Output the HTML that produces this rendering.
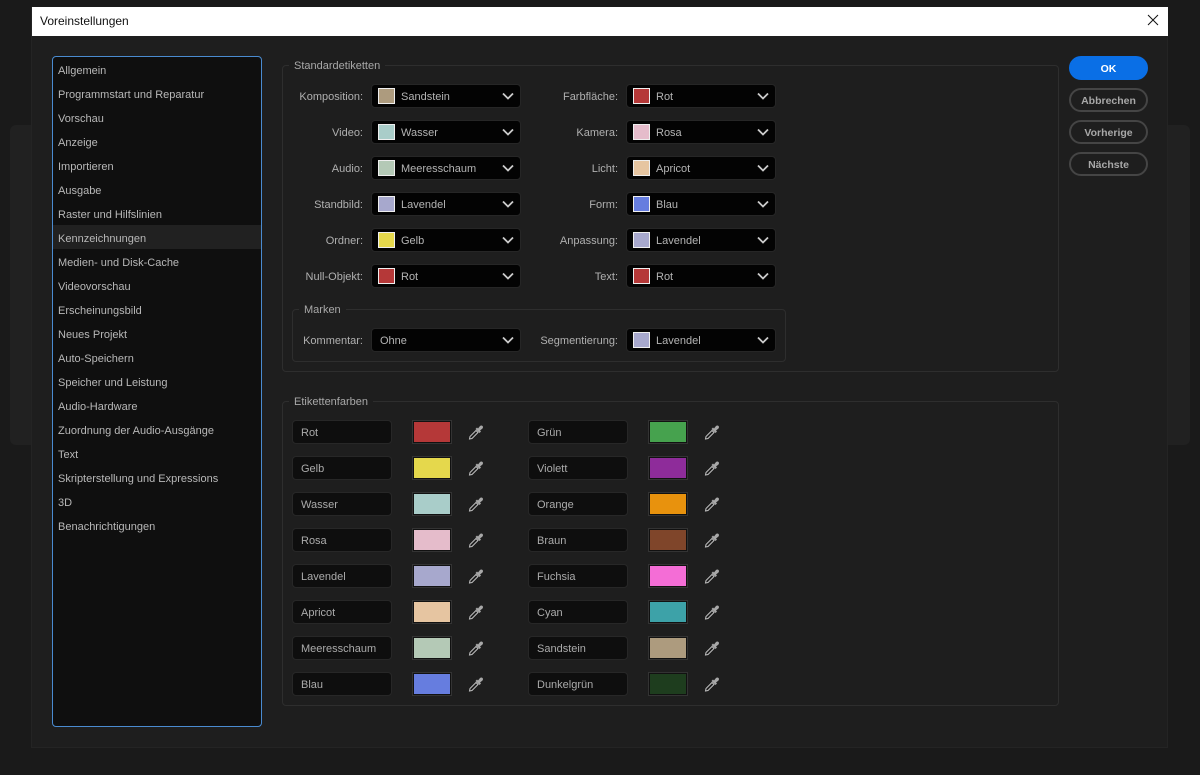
<!DOCTYPE html>
<html lang="de"><head><meta charset="utf-8"><title>Voreinstellungen</title>
<style>
html,body{margin:0;padding:0;width:1200px;height:775px;overflow:hidden;background:#1a1a1a}
*{box-sizing:border-box}
body{position:relative;font:11px/16px "Liberation Sans",sans-serif;color:#b4b4b4}
div,span,svg{position:absolute}
.bgp{left:10px;top:125px;width:1180px;height:320px;background:#212121;border-radius:6px}
.dlg{left:31px;top:7px;width:1137px;height:741px;background:#1e1e1e;border:1px solid #242424;border-top:0}
.tb{left:32px;top:7px;width:1136px;height:29px;background:#fff;color:#111;font-size:12px;line-height:28px;padding-left:8px}
.list{left:52px;top:56px;width:210px;height:671px;background:#0f0f0f;border:1px solid #4a8bd0;border-radius:4px}
.it{left:58px;width:200px;height:24px;margin-top:1px;line-height:24px;white-space:nowrap;color:#b8b8b8}
.sel{left:53px;top:225px;width:208px;height:24px;background:#212121}
.grp{border:1px solid #2e2e2e;border-radius:4px}
.lg{background:#1e1e1e;padding:0 5px;height:16px;line-height:18px;white-space:nowrap;color:#a8a8a8}
.lb{width:90px;height:16px;margin-top:1px;text-align:right;white-space:nowrap;color:#b0b0b0}
.dd{width:150px;height:24px;background:#030303;border:1px solid #262626;border-radius:4px}
.sw{left:6px;top:3px;width:17px;height:16px;border:1px solid #eee}
.t{left:29px;top:4px;white-space:nowrap;color:#b4b4b4}
.ch{left:129px;top:7px;width:14px;height:9px}
.inp{width:100px;height:24px;background:#0e0e0e;border:1px solid #272727;border-radius:4px;padding-left:8px;line-height:24px;color:#ababab}
.cs{width:40px;height:24px;border:2px solid #111;outline:1px solid #333;outline-offset:-1px}
.ey{width:16px;height:16px}
.btn{left:1069px;width:79px;height:24px;border-radius:12px;border:2px solid #454545;text-align:center;line-height:22px;font-weight:bold;color:#a8a8a8;font-size:10.500px}
</style></head><body>
<div class="bgp"></div>
<div class="dlg"></div>
<div class="tb">Voreinstellungen</div>
<svg style="left:1147px;top:14px;width:12px;height:12px" viewBox="0 0 12 12"><path d="M1 1L11 11M11 1L1 11" stroke="#111" stroke-width="1" fill="none"/></svg>
<div class="list"></div><div class="sel"></div>
<div class="it" style="top:58px">Allgemein</div>
<div class="it" style="top:82px">Programmstart und Reparatur</div>
<div class="it" style="top:106px">Vorschau</div>
<div class="it" style="top:130px">Anzeige</div>
<div class="it" style="top:154px">Importieren</div>
<div class="it" style="top:178px">Ausgabe</div>
<div class="it" style="top:202px">Raster und Hilfslinien</div>
<div class="it" style="top:226px">Kennzeichnungen</div>
<div class="it" style="top:250px">Medien- und Disk-Cache</div>
<div class="it" style="top:274px">Videovorschau</div>
<div class="it" style="top:298px">Erscheinungsbild</div>
<div class="it" style="top:322px">Neues Projekt</div>
<div class="it" style="top:346px">Auto-Speichern</div>
<div class="it" style="top:370px">Speicher und Leistung</div>
<div class="it" style="top:394px">Audio-Hardware</div>
<div class="it" style="top:418px">Zuordnung der Audio-Ausgänge</div>
<div class="it" style="top:442px">Text</div>
<div class="it" style="top:466px">Skripterstellung und Expressions</div>
<div class="it" style="top:490px">3D</div>
<div class="it" style="top:514px">Benachrichtigungen</div>

<div class="grp" style="left:282px;top:65px;width:777px;height:307px"></div>
<div class="lg" style="left:289px;top:57px">Standardetiketten</div>
<div class="grp" style="left:292px;top:309px;width:494px;height:53px"></div>
<div class="lg" style="left:299px;top:301px">Marken</div>
<div class="grp" style="left:282px;top:401px;width:777px;height:305px"></div>
<div class="lg" style="left:289px;top:393px">Etikettenfarben</div>

<div class="lb" style="left:273px;top:88px">Komposition:</div>
<div class="dd" style="left:371px;top:84px"><div class="sw" style="background:#ad9b7e"></div><span class="t">Sandstein</span><svg class="ch" viewBox="0 0 14 9"><path d="M2 1.500L7 6.500L12 1.500" stroke="#ccc" stroke-width="1.800" fill="none"/></svg></div>
<div class="lb" style="left:273px;top:124px">Video:</div>
<div class="dd" style="left:371px;top:120px"><div class="sw" style="background:#a9cdc9"></div><span class="t">Wasser</span><svg class="ch" viewBox="0 0 14 9"><path d="M2 1.500L7 6.500L12 1.500" stroke="#ccc" stroke-width="1.800" fill="none"/></svg></div>
<div class="lb" style="left:273px;top:160px">Audio:</div>
<div class="dd" style="left:371px;top:156px"><div class="sw" style="background:#b4c9b6"></div><span class="t">Meeresschaum</span><svg class="ch" viewBox="0 0 14 9"><path d="M2 1.500L7 6.500L12 1.500" stroke="#ccc" stroke-width="1.800" fill="none"/></svg></div>
<div class="lb" style="left:273px;top:196px">Standbild:</div>
<div class="dd" style="left:371px;top:192px"><div class="sw" style="background:#a7a8cd"></div><span class="t">Lavendel</span><svg class="ch" viewBox="0 0 14 9"><path d="M2 1.500L7 6.500L12 1.500" stroke="#ccc" stroke-width="1.800" fill="none"/></svg></div>
<div class="lb" style="left:273px;top:232px">Ordner:</div>
<div class="dd" style="left:371px;top:228px"><div class="sw" style="background:#e5d84c"></div><span class="t">Gelb</span><svg class="ch" viewBox="0 0 14 9"><path d="M2 1.500L7 6.500L12 1.500" stroke="#ccc" stroke-width="1.800" fill="none"/></svg></div>
<div class="lb" style="left:273px;top:268px">Null-Objekt:</div>
<div class="dd" style="left:371px;top:264px"><div class="sw" style="background:#b53838"></div><span class="t">Rot</span><svg class="ch" viewBox="0 0 14 9"><path d="M2 1.500L7 6.500L12 1.500" stroke="#ccc" stroke-width="1.800" fill="none"/></svg></div>

<div class="lb" style="left:528px;top:88px">Farbfläche:</div>
<div class="dd" style="left:626px;top:84px"><div class="sw" style="background:#b53838"></div><span class="t">Rot</span><svg class="ch" viewBox="0 0 14 9"><path d="M2 1.500L7 6.500L12 1.500" stroke="#ccc" stroke-width="1.800" fill="none"/></svg></div>
<div class="lb" style="left:528px;top:124px">Kamera:</div>
<div class="dd" style="left:626px;top:120px"><div class="sw" style="background:#e5bccb"></div><span class="t">Rosa</span><svg class="ch" viewBox="0 0 14 9"><path d="M2 1.500L7 6.500L12 1.500" stroke="#ccc" stroke-width="1.800" fill="none"/></svg></div>
<div class="lb" style="left:528px;top:160px">Licht:</div>
<div class="dd" style="left:626px;top:156px"><div class="sw" style="background:#e6c5a1"></div><span class="t">Apricot</span><svg class="ch" viewBox="0 0 14 9"><path d="M2 1.500L7 6.500L12 1.500" stroke="#ccc" stroke-width="1.800" fill="none"/></svg></div>
<div class="lb" style="left:528px;top:196px">Form:</div>
<div class="dd" style="left:626px;top:192px"><div class="sw" style="background:#667ddf"></div><span class="t">Blau</span><svg class="ch" viewBox="0 0 14 9"><path d="M2 1.500L7 6.500L12 1.500" stroke="#ccc" stroke-width="1.800" fill="none"/></svg></div>
<div class="lb" style="left:528px;top:232px">Anpassung:</div>
<div class="dd" style="left:626px;top:228px"><div class="sw" style="background:#a7a8cd"></div><span class="t">Lavendel</span><svg class="ch" viewBox="0 0 14 9"><path d="M2 1.500L7 6.500L12 1.500" stroke="#ccc" stroke-width="1.800" fill="none"/></svg></div>
<div class="lb" style="left:528px;top:268px">Text:</div>
<div class="dd" style="left:626px;top:264px"><div class="sw" style="background:#b53838"></div><span class="t">Rot</span><svg class="ch" viewBox="0 0 14 9"><path d="M2 1.500L7 6.500L12 1.500" stroke="#ccc" stroke-width="1.800" fill="none"/></svg></div>

<div class="lb" style="left:273px;top:332px">Kommentar:</div>
<div class="dd" style="left:371px;top:328px"><span class="t" style="left:8px">Ohne</span><svg class="ch" viewBox="0 0 14 9"><path d="M2 1.500L7 6.500L12 1.500" stroke="#ccc" stroke-width="1.800" fill="none"/></svg></div>
<div class="lb" style="left:528px;top:332px">Segmentierung:</div>
<div class="dd" style="left:626px;top:328px"><div class="sw" style="background:#a7a8cd"></div><span class="t">Lavendel</span><svg class="ch" viewBox="0 0 14 9"><path d="M2 1.500L7 6.500L12 1.500" stroke="#ccc" stroke-width="1.800" fill="none"/></svg></div>

<svg width="0" height="0" style="left:0;top:0"><defs><g id="e"><path d="M1.500 15L2 12.500L8 6.500L10 8.500L4 14.500Z" fill="#1e1e1e" stroke="#c0c0c0" stroke-width="1"/><path d="M7.500 5L11.500 9L13 7.500L12 6.500L14.500 4.500Q15.500 3 14.500 2Q13.500 1 12 2L10 4.500L9 3.500Z" fill="#a8a8a8"/></g></defs></svg>

<div class="inp" style="left:292px;top:420px">Rot</div><div class="cs" style="left:412px;top:420px;background:#b53838"></div><svg class="ey" style="left:468px;top:424px"><use href="#e"/></svg>
<div class="inp" style="left:292px;top:456px">Gelb</div><div class="cs" style="left:412px;top:456px;background:#e5d84c"></div><svg class="ey" style="left:468px;top:460px"><use href="#e"/></svg>
<div class="inp" style="left:292px;top:492px">Wasser</div><div class="cs" style="left:412px;top:492px;background:#a9cdc9"></div><svg class="ey" style="left:468px;top:496px"><use href="#e"/></svg>
<div class="inp" style="left:292px;top:528px">Rosa</div><div class="cs" style="left:412px;top:528px;background:#e5bccb"></div><svg class="ey" style="left:468px;top:532px"><use href="#e"/></svg>
<div class="inp" style="left:292px;top:564px">Lavendel</div><div class="cs" style="left:412px;top:564px;background:#a7a8cd"></div><svg class="ey" style="left:468px;top:568px"><use href="#e"/></svg>
<div class="inp" style="left:292px;top:600px">Apricot</div><div class="cs" style="left:412px;top:600px;background:#e6c5a1"></div><svg class="ey" style="left:468px;top:604px"><use href="#e"/></svg>
<div class="inp" style="left:292px;top:636px">Meeresschaum</div><div class="cs" style="left:412px;top:636px;background:#b4c9b6"></div><svg class="ey" style="left:468px;top:640px"><use href="#e"/></svg>
<div class="inp" style="left:292px;top:672px">Blau</div><div class="cs" style="left:412px;top:672px;background:#667ddf"></div><svg class="ey" style="left:468px;top:676px"><use href="#e"/></svg>

<div class="inp" style="left:528px;top:420px">Grün</div><div class="cs" style="left:648px;top:420px;background:#46a24e"></div><svg class="ey" style="left:704px;top:424px"><use href="#e"/></svg>
<div class="inp" style="left:528px;top:456px">Violett</div><div class="cs" style="left:648px;top:456px;background:#8e2c9a"></div><svg class="ey" style="left:704px;top:460px"><use href="#e"/></svg>
<div class="inp" style="left:528px;top:492px">Orange</div><div class="cs" style="left:648px;top:492px;background:#e8920d"></div><svg class="ey" style="left:704px;top:496px"><use href="#e"/></svg>
<div class="inp" style="left:528px;top:528px">Braun</div><div class="cs" style="left:648px;top:528px;background:#7f452a"></div><svg class="ey" style="left:704px;top:532px"><use href="#e"/></svg>
<div class="inp" style="left:528px;top:564px">Fuchsia</div><div class="cs" style="left:648px;top:564px;background:#f46dd6"></div><svg class="ey" style="left:704px;top:568px"><use href="#e"/></svg>
<div class="inp" style="left:528px;top:600px">Cyan</div><div class="cs" style="left:648px;top:600px;background:#3da2a8"></div><svg class="ey" style="left:704px;top:604px"><use href="#e"/></svg>
<div class="inp" style="left:528px;top:636px">Sandstein</div><div class="cs" style="left:648px;top:636px;background:#ad9b7e"></div><svg class="ey" style="left:704px;top:640px"><use href="#e"/></svg>
<div class="inp" style="left:528px;top:672px">Dunkelgrün</div><div class="cs" style="left:648px;top:672px;background:#1e3d1e"></div><svg class="ey" style="left:704px;top:676px"><use href="#e"/></svg>

<div class="btn" style="top:56px;background:#0a6fe6;border-color:#0a6fe6;color:#fff">OK</div>
<div class="btn" style="top:88px">Abbrechen</div>
<div class="btn" style="top:120px">Vorherige</div>
<div class="btn" style="top:152px">Nächste</div>
</body></html>
